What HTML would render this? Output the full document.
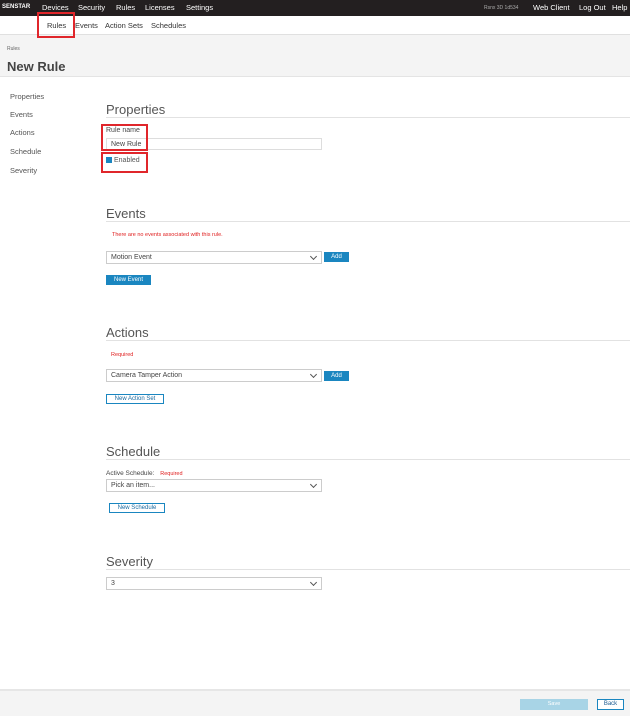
<!DOCTYPE html>
<html><head><style>
*{margin:0;padding:0;box-sizing:border-box}
body{width:630px;height:716px;position:relative;background:#fff;font-family:"Liberation Sans",sans-serif;color:#444;overflow:hidden}
.a{position:absolute;white-space:nowrap}
.top{left:0;top:0;width:630px;height:16px;background:#231f20}
.top span{position:absolute;top:3px;color:#fff;font-size:7.5px}
.sub{font-size:7.5px;color:#333;top:21px}
.nav{left:10px;font-size:7.5px;color:#555}
.h{left:106px;font-size:13px;color:#555}
.line{left:106px;width:524px;height:1px;background:#e2e2e2}
.sel{left:106px;width:216px;height:13px;border:1px solid #ccc;font-size:7px;line-height:11px;padding:0 4px;color:#444}
.sel.dd:after{content:"";position:absolute;right:5px;top:2px;width:4px;height:4px;border-right:1.5px solid #555;border-bottom:1.5px solid #555;transform:rotate(45deg)}
.btn{background:#1a86c0;color:#fff;font-size:6px;text-align:center;line-height:10px;height:10px}
.obtn{border:1px solid #1a86c0;color:#1a6aa0;font-size:6px;text-align:center;line-height:8px;height:10px;background:#fff}
.red{color:#e02020;font-size:5.5px}
.box{border:2px solid #e0262b}
</style></head><body>
<div class="a top">
<span style="left:2px;font-size:6px;top:4px;font-weight:bold">SENSTAR</span>
<span style="left:42px">Devices</span><span style="left:78px">Security</span><span style="left:116px">Rules</span><span style="left:145px">Licenses</span><span style="left:186px">Settings</span>
<span style="left:484px;font-size:5px;top:5px;color:#aaa">Rsnx 3D 1d534</span>
<span style="left:533px">Web Client</span><span style="left:579px">Log Out</span><span style="left:612px">Help</span>
</div>
<div class="a" style="left:0;top:34px;width:630px;height:43px;background:#f4f4f4;border-top:1px solid #e0e0e0;border-bottom:1px solid #e4e4e4"></div>
<div class="a sub" style="left:47px">Rules</div>
<div class="a sub" style="left:75px">Events</div>
<div class="a sub" style="left:105px">Action Sets</div>
<div class="a sub" style="left:151px">Schedules</div>
<div class="a box" style="left:37px;top:12px;width:38px;height:26px"></div>
<div class="a" style="left:7px;top:46px;font-size:5px;color:#666">Rules</div>
<div class="a" style="left:7px;top:59px;font-size:13px;font-weight:bold;color:#444">New Rule</div>
<div class="a nav" style="top:92px">Properties</div>
<div class="a nav" style="top:110px">Events</div>
<div class="a nav" style="top:128px">Actions</div>
<div class="a nav" style="top:147px">Schedule</div>
<div class="a nav" style="top:166px">Severity</div>

<div class="a h" style="top:102px">Properties</div><div class="a line" style="top:117px"></div>
<div class="a" style="left:106px;top:127px;font-size:7px">Rule name</div>
<div class="a sel" style="top:138px;height:12px;border-color:#ddd">New Rule</div>
<div class="a" style="left:106px;top:157px;width:6px;height:6px;background:#1a86c0"></div>
<div class="a" style="left:114px;top:157px;font-size:7px;color:#555">Enabled</div>
<div class="a box" style="left:101px;top:124px;width:47px;height:27px"></div>
<div class="a box" style="left:101px;top:152px;width:47px;height:21px"></div>

<div class="a h" style="top:206px">Events</div><div class="a line" style="top:221px"></div>
<div class="a red" style="left:112px;top:232px">There are no events associated with this rule.</div>
<div class="a sel dd" style="top:251px">Motion Event</div>
<div class="a btn" style="left:324px;top:252px;width:25px">Add</div>
<div class="a btn" style="left:106px;top:275px;width:45px">New Event</div>

<div class="a h" style="top:325px">Actions</div><div class="a line" style="top:340px"></div>
<div class="a red" style="left:111px;top:352px">Required</div>
<div class="a sel dd" style="top:369px">Camera Tamper Action</div>
<div class="a btn" style="left:324px;top:371px;width:25px">Add</div>
<div class="a obtn" style="left:106px;top:394px;width:58px">New Action Set</div>

<div class="a h" style="top:444px">Schedule</div><div class="a line" style="top:459px"></div>
<div class="a" style="left:106px;top:470px;font-size:6.5px">Active Schedule: <span class="red" style="margin-left:4px">Required</span></div>
<div class="a sel dd" style="top:479px">Pick an item...</div>
<div class="a obtn" style="left:109px;top:503px;width:56px">New Schedule</div>

<div class="a h" style="top:554px">Severity</div><div class="a line" style="top:569px"></div>
<div class="a sel dd" style="top:577px">3</div>

<div class="a" style="left:0;top:689px;width:630px;height:27px;background:#f4f4f4;border-top:2px solid #e6e6e6"></div>
<div class="a" style="left:520px;top:699px;width:68px;height:11px;background:#a8d4e6;color:#fff;font-size:5.5px;text-align:center;line-height:11px">Save</div>
<div class="a obtn" style="left:597px;top:699px;width:27px;height:11px;line-height:9px;color:#1a5a90">Back</div>
</body></html>
